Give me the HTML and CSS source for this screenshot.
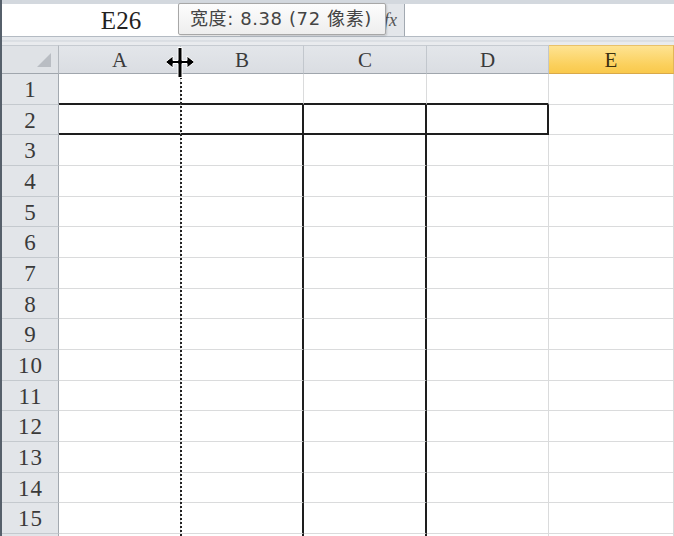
FILE: index.html
```html
<!DOCTYPE html>
<html lang="zh-CN">
<head>
  <meta charset="UTF-8"/>
  <title>列宽调整</title>
  <link rel="stylesheet" href="styles.css">
</head>
<body>
  <div class="window">
    <div class="formula-bar">
      <div class="name-box">E26</div>
      <div class="fx-area"><span class="fx">fx</span></div>
      <div class="formula-input"></div>
      <div class="tooltip">宽度: 8.38 (72 像素)</div>
    </div>
    <div class="band"></div>

    <div class="grid">
      <div class="corner"><span class="tri"></span></div>
      <div class="col-head">A</div>
      <div class="col-head">B</div>
      <div class="col-head">C</div>
      <div class="col-head">D</div>
      <div class="col-head sel">E</div>

      <div class="row-head">1</div>
      <div class="cell tb"></div><div class="cell tb"></div><div class="cell tb"></div><div class="cell tb"></div><div class="cell"></div>

      <div class="row-head">2</div>
      <div class="cell tb"></div><div class="cell tb tr"></div><div class="cell tb tr"></div><div class="cell tb tr"></div><div class="cell"></div>

      <div class="row-head">3</div>
      <div class="cell"></div><div class="cell tr"></div><div class="cell tr"></div><div class="cell"></div><div class="cell"></div>
      <div class="row-head">4</div>
      <div class="cell"></div><div class="cell tr"></div><div class="cell tr"></div><div class="cell"></div><div class="cell"></div>
      <div class="row-head">5</div>
      <div class="cell"></div><div class="cell tr"></div><div class="cell tr"></div><div class="cell"></div><div class="cell"></div>
      <div class="row-head">6</div>
      <div class="cell"></div><div class="cell tr"></div><div class="cell tr"></div><div class="cell"></div><div class="cell"></div>
      <div class="row-head">7</div>
      <div class="cell"></div><div class="cell tr"></div><div class="cell tr"></div><div class="cell"></div><div class="cell"></div>
      <div class="row-head">8</div>
      <div class="cell"></div><div class="cell tr"></div><div class="cell tr"></div><div class="cell"></div><div class="cell"></div>
      <div class="row-head">9</div>
      <div class="cell"></div><div class="cell tr"></div><div class="cell tr"></div><div class="cell"></div><div class="cell"></div>
      <div class="row-head">10</div>
      <div class="cell"></div><div class="cell tr"></div><div class="cell tr"></div><div class="cell"></div><div class="cell"></div>
      <div class="row-head">11</div>
      <div class="cell"></div><div class="cell tr"></div><div class="cell tr"></div><div class="cell"></div><div class="cell"></div>
      <div class="row-head">12</div>
      <div class="cell"></div><div class="cell tr"></div><div class="cell tr"></div><div class="cell"></div><div class="cell"></div>
      <div class="row-head">13</div>
      <div class="cell"></div><div class="cell tr"></div><div class="cell tr"></div><div class="cell"></div><div class="cell"></div>
      <div class="row-head">14</div>
      <div class="cell"></div><div class="cell tr"></div><div class="cell tr"></div><div class="cell"></div><div class="cell"></div>
      <div class="row-head">15</div>
      <div class="cell"></div><div class="cell tr"></div><div class="cell tr"></div><div class="cell"></div><div class="cell"></div>
      <div class="row-head"></div>
      <div class="cell"></div><div class="cell tr"></div><div class="cell tr"></div><div class="cell"></div><div class="cell"></div>
    </div>

    <!-- column resize guide + cursor -->
    <div class="resize-guide"></div>
    <svg class="cursor" width="32" height="32" viewBox="0 0 32 32">
      <path fill="#000" stroke="#fff" stroke-width="1"
            d="M14 0.5 H18 V13.5 H23 V9 L30.5 15 L23 21 V16.5 H18 V30.5 H14 V16.5 H9 V21 L1.5 15 L9 9 V13.5 H14 Z"/>
    </svg>
  </div>
</body>
</html>
```

FILE: styles.css
```css
html, body {
  margin: 0;
  padding: 0;
}
body {
  width: 674px;
  height: 536px;
  overflow: hidden;
  background: #dde1e6;
}
.window {
  position: relative;
  width: 672px;
  height: 536px;
  border-left: 2px solid #56606b;
  overflow: hidden;
  font-family: "Liberation Serif", "DejaVu Serif", serif;
  color: #3a3a3a;
}

/* formula bar */
.formula-bar {
  position: relative;
  display: flex;
  height: 37px;
  padding-top: 4px;
  box-sizing: border-box;
  background: #d3d8de;
  border-bottom: 1px solid #b4bbc3;
}
.name-box {
  width: 238px;
  background: #fff;
  font-size: 25px;
  line-height: 34px;
  text-align: center;
  color: #222;
}
.fx-area {
  flex: 1;
  display: flex;
  justify-content: flex-end;
  align-items: center;
  padding-right: 7px;
  border-right: 1px solid #a2a9b1;
  background: #e3e6ea;
}
.fx {
  font-style: italic;
  font-size: 18px;
  color: #555;
}
.formula-input {
  width: 269px;
  background: #fff;
}
.tooltip {
  position: absolute;
  left: 176px;
  top: 3px;
  width: 208px;
  height: 32px;
  box-sizing: border-box;
  border: 1px solid #a7a7a7;
  border-radius: 2px;
  background: linear-gradient(#fdfdfd, #eeeeee);
  box-shadow: 1px 1px 2px rgba(0, 0, 0, 0.15);
  font-family: "DejaVu Sans", "Noto Sans CJK SC", sans-serif;
  font-size: 18px;
  letter-spacing: 0.6px;
  line-height: 30px;
  color: #444;
  padding-left: 11px;
  white-space: nowrap;
}
.band {
  height: 8px;
  background: linear-gradient(#e6e9ed, #e6e9ed 3px, #cfd4da 4px, #e9ebee 5px);
}

/* sheet grid */
.grid {
  display: grid;
  grid-template-columns: 57px 122px 123px 123px 122px 1fr;
  grid-template-rows: 29px;
  grid-auto-rows: 30.67px;
}
.corner {
  position: relative;
  background: #dfe2e6;
  border-right: 1px solid #b3b8be;
  border-bottom: 1px solid #a0a6ad;
  border-top: 1px solid #c6cbd1;
}
.tri {
  position: absolute;
  right: 7px;
  bottom: 6px;
  width: 0;
  height: 0;
  border-left: 14px solid transparent;
  border-bottom: 14px solid #b9bdc3;
}
.col-head {
  background: linear-gradient(#e3e6ea, #dadde2);
  border-top: 1px solid #c6cbd1;
  border-right: 1px solid #c2c7cd;
  border-bottom: 1px solid #a0a6ad;
  font-size: 21px;
  line-height: 29px;
  text-align: center;
}
.col-head.sel {
  background: linear-gradient(#fee392, #fbd05c 70%, #f9c94c);
  border-right-color: #e2b658;
  border-bottom-color: #d9a94a;
  border-top-color: #e8c16a;
  color: #3b3010;
}
.row-head {
  background: #e2e5e9;
  border-right: 1px solid #a3a9b0;
  border-bottom: 1px solid #c4c9ce;
  font-size: 23px;
  letter-spacing: 1px;
  text-indent: 1px;
  text-align: center;
  line-height: 32px;
}
.cell {
  background: #fff;
  border-right: 1px solid #dadbdc;
  border-bottom: 1px solid #dadbdc;
}
.cell.tb {
  border-bottom: 2px solid #1e1e1e;
}
.cell.tr {
  border-right: 2px solid #1e1e1e;
}

/* overlays */
.resize-guide {
  position: absolute;
  left: 178px;
  top: 77px;
  bottom: 0;
  border-left: 2px dotted #222;
}
.cursor {
  position: absolute;
  left: 162px;
  top: 47px;
}
```
